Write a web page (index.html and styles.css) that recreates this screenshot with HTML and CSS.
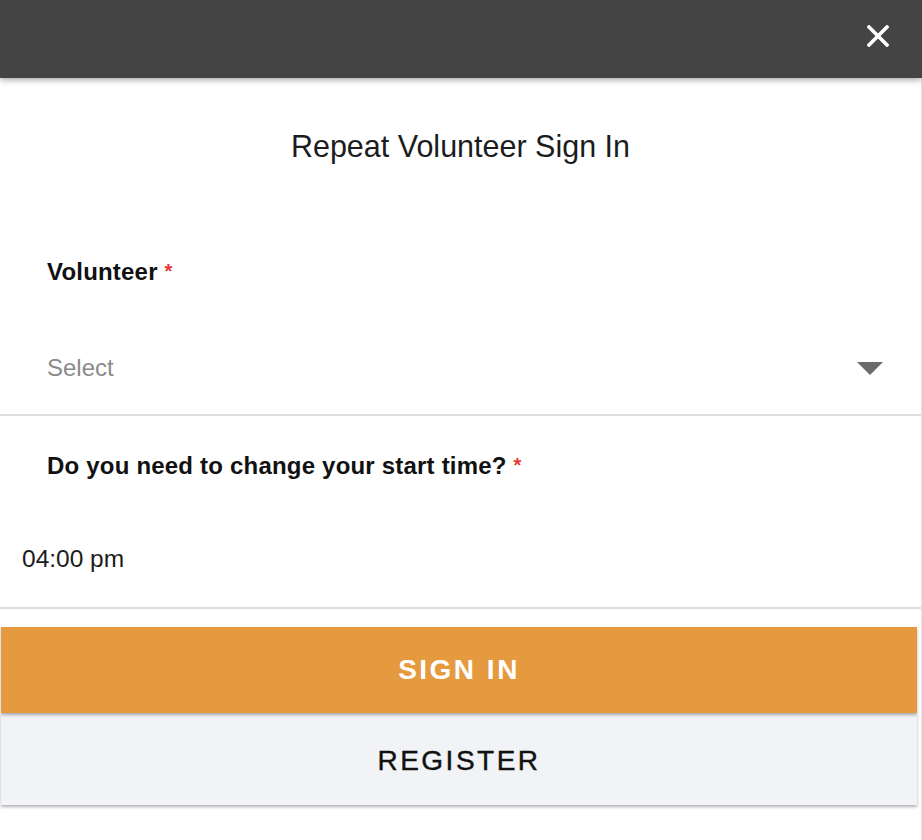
FILE: index.html
```html
<!DOCTYPE html>
<html>
<head>
<meta charset="utf-8">
<link rel="stylesheet" href="styles.css">
</head>
<body>
<div class="page">
  <header class="topbar">
    <button class="close" aria-label="Close">
      <svg width="22" height="22" viewBox="0 0 22 22"><path d="M2 2 L20 20 M20 2 L2 20" stroke="#fff" stroke-width="3.6" stroke-linecap="square"/></svg>
    </button>
  </header>
  <main class="panel">
    <h1 class="title">Repeat Volunteer Sign In</h1>
    <section class="field field-volunteer">
      <div class="label">Volunteer <span class="req">*</span></div>
      <div class="select">
        <span class="placeholder">Select</span>
        <svg class="caret" width="26" height="13" viewBox="0 0 26 13"><polygon points="0,0 26,0 13,13" fill="#6b6b6b"/></svg>
      </div>
    </section>
    <div class="divider"></div>
    <section class="field field-time">
      <div class="label">Do you need to change your start time? <span class="req">*</span></div>
      <div class="time">04:00 pm</div>
    </section>
    <div class="divider"></div>
    <div class="actions">
      <button class="btn btn-primary">SIGN IN</button>
      <button class="btn btn-secondary">REGISTER</button>
    </div>
  </main>
</div>
</body>
</html>
```
FILE: styles.css
```css
* { box-sizing: border-box; }
html, body { margin: 0; padding: 0; background: #fff; }
body { font-family: "Liberation Sans", Arial, sans-serif; width: 922px; height: 840px; overflow: hidden; }
.page { display: flex; flex-direction: column; height: 840px; }
.topbar {
  height: 78px; background: #444444; display: flex; justify-content: flex-end; align-items: flex-start;
  box-shadow: 0 2px 6px rgba(0,0,0,0.35); position: relative; z-index: 2;
}
.close { background: none; border: none; padding: 0; margin: 25px 33px 0 0; width: 22px; height: 22px; cursor: pointer; display: block; }
.close svg { display: block; }
.panel { flex: 1; border-right: 1px solid #e2e2e2; display: flex; flex-direction: column; }
.title { margin: 53px 0 0; text-align: center; font-weight: normal; font-size: 30.5px; line-height: 30px; color: #1c1c1c; }
.field { padding: 0; }
.field-volunteer { margin-top: 96px; }
.label { font-weight: bold; font-size: 24px; line-height: 28px; color: #111; padding-left: 47px; letter-spacing: 0.2px; }
.req { color: #e53935; font-size: 20px; vertical-align: 2px; }
.select { display: flex; justify-content: space-between; align-items: center; margin-top: 68px; padding: 0 38px 0 47px; height: 28px; }
.placeholder { font-size: 24px; color: #8a8a8a; }
.caret { display: block; }
.divider { height: 2px; background: #dedede; }
.field-volunteer + .divider { margin-top: 32px; }
.field-time { margin-top: 35px; }
.time { margin-top: 65px; padding-left: 22px; font-size: 24.5px; line-height: 28px; color: #1c1c1c; }
.field-time + .divider { margin-top: 34px; }
.actions { margin: 18px 4px 0 1px; display: flex; flex-direction: column; }
.btn { border: none; width: 100%; font-family: "Liberation Sans", Arial, sans-serif; font-size: 28px; letter-spacing: 2.5px; cursor: pointer; box-shadow: 0 2px 3px rgba(0,0,0,0.3); }
.btn-primary { height: 86px; background: #e69a3f; color: #fff; font-weight: bold; position: relative; z-index: 1; }
.btn-secondary { height: 92px; background: #f2f3f7; color: #111; margin-top: 0; padding-top: 5px; -webkit-text-stroke: 0.4px #111; }
```
